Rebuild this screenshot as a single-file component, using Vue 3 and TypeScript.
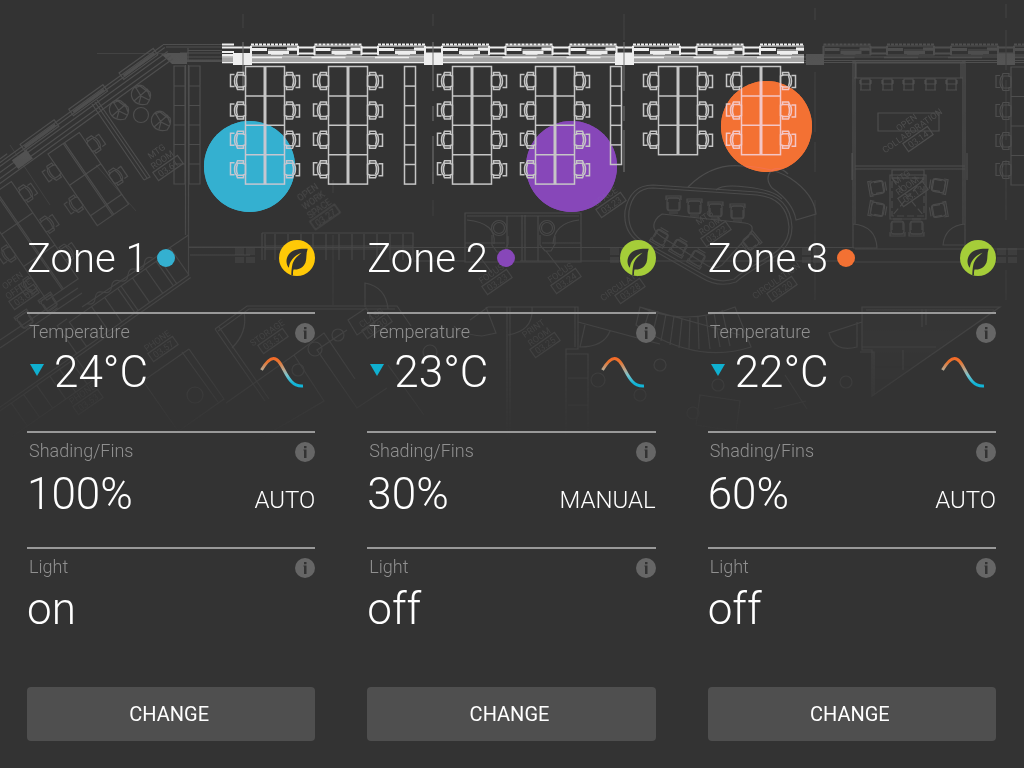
<script setup lang="ts">
interface Zone {
  id: number
  name: string
  color: string
  leaf: string
  temperature: string
  shading: string
  mode: string
  light: string
}

const zones: Zone[] = [
  { id: 1, name: 'Zone 1', color: '#34b0d0', leaf: '#ffc907', temperature: '24°C', shading: '100%', mode: 'AUTO', light: 'on' },
  { id: 2, name: 'Zone 2', color: '#8747b9', leaf: '#a5cd39', temperature: '23°C', shading: '30%', mode: 'MANUAL', light: 'off' },
  { id: 3, name: 'Zone 3', color: '#f37133', leaf: '#a5cd39', temperature: '22°C', shading: '60%', mode: 'AUTO', light: 'off' },
]

interface Desk { x: number; rows: number }
const desks: Desk[] = [
  { x: 245, rows: 4 },
  { x: 328, rows: 4 },
  { x: 452, rows: 4 },
  { x: 535, rows: 4 },
  { x: 658, rows: 3 },
  { x: 741, rows: 3 },
]
const cabinets = [
  { x: 404.5, cells: 6 },
  { x: 610.5, cells: 5 },
]
const spots = [
  { x: 249.5, y: 166.5, color: '#34b0d0' },
  { x: 571.5, y: 166.5, color: '#8747b9' },
  { x: 766.5, y: 126.5, color: '#f37133' },
]

interface Sign { x: number; y: number; lines: string[]; code: string }
const signs: Sign[] = [
  { x: 168, y: 168, lines: ['MTG', 'ROOM'], code: '03.61' },
  { x: 325, y: 217, lines: ['OPEN', 'WORK', 'SPACE'], code: '03.27' },
  { x: 611, y: 205, lines: ['SPACE'], code: '03.23' },
  { x: 918, y: 139, lines: ['OPEN', 'COLLABORATION'], code: '03.14' },
  { x: 913, y: 194, lines: ['MTG', 'ROOM'], code: '03.13' },
  { x: 716, y: 234, lines: ['MTG', 'ROOM'], code: '03.22' },
  { x: 782, y: 289, lines: ['CIRCULATION'], code: '03.20' },
  { x: 630, y: 291, lines: ['CIRCULATION'], code: '03.28' },
  { x: 497, y: 282, lines: ['FOCUS'], code: '03.23' },
  { x: 566, y: 281, lines: ['FOCUS'], code: '03.24' },
  { x: 24, y: 297, lines: ['OPEN', 'OFFICE'], code: '03.02' },
  { x: 163, y: 349, lines: ['PHONE'], code: '03.57' },
  { x: 273, y: 341, lines: ['STORAGE'], code: '03.51' },
  { x: 545, y: 345, lines: ['PRINT', 'ROOM'], code: '03.25' },
  { x: 377, y: 326, lines: ['CLASS'], code: '03.30' },
  { x: 88, y: 402, lines: ['PHONE'], code: '03.53' },
]

const brightWindows = [251, 314.5, 378, 442, 505.5, 569.5, 633, 696.5, 760]
const paleWindows = [823.5, 887, 951, 1014]
</script>

<template>
  <main class="dashboard">
    <svg class="plan" viewBox="0 0 1024 440" aria-hidden="true">
      <defs>
        <linearGradient id="fade" gradientUnits="userSpaceOnUse" x1="0" y1="0" x2="0" y2="440">
          <stop offset="0" stop-color="#fff" />
          <stop offset=".38" stop-color="#e4e4e4" />
          <stop offset=".55" stop-color="#b0b0b0" />
          <stop offset=".8" stop-color="#808080" />
          <stop offset="1" stop-color="#000" />
        </linearGradient>
        <mask id="fadeMask" maskUnits="userSpaceOnUse" x="0" y="0" width="1024" height="440">
          <rect width="1024" height="440" fill="url(#fade)" />
        </mask>
        <clipPath id="brightEdge"><rect x="222" y="40" width="582" height="30" /></clipPath>
        <g id="chair">
          <path d="M-11-6.500h-4v12h4M-10-5q1.500-1 3-1h4l3 1v10l-3 1h-4q-2 0-3-1M-10-5q-2 5 0 10M-8-5q-2 5 0 10M-9-6l1-2.500h6v2.500M-9 6l1 2.500h6v-2.500" />
        </g>
        <g id="seat">
          <rect x="-6" y="-7" width="13" height="13" rx="3" />
          <path d="M-7-7h15M-7-5v-4h15v4M-5-3v8h11v-8M-4 8h9" />
        </g>
        <g id="window">
          <path d="M0 46h47v9H0zM17 50h30" stroke-width="1.200" />
          <path d="M0 44.500h47" stroke-width="2" stroke-dasharray="3 1" />
          <path d="M1 49.500h15M17 52.500h21M36 49h10" stroke-width="3" />
          <path d="M0 46v9M47 46v9" stroke-width="2" />
          <path d="M47 47.500h17M47 53.500h17" stroke-width="2" />
          <path d="M20 54h12M-3 57.500h34" stroke-width="1.500" />
        </g>
      </defs>

      <circle v-for="s in spots" :key="s.x" :cx="s.x" :cy="s.y" r="45.500" :fill="s.color" />

      <g class="pale" mask="url(#fadeMask)">
        <!-- straight facade, both unlit ends -->
        <path d="M163 44.500h59M166 47h56M188 50.500h34M180 53h42M172 57h50M180 61.500h42M188 48v14" />
        <path d="M186 60.500h36" stroke-width="2" />
        <path class="solid" d="M160 53h27v11h-15z" />
        <path d="M804 57h220M804 60.500h220M804 62.500h220" />
        <use v-for="x in paleWindows" :key="x" href="#window" :x="x" />
        <rect class="solid" x="806" y="54" width="18" height="11" />
        <rect class="solid" x="997" y="54" width="18" height="11" />
        <path class="thin" d="M97 53.500h70M243 14v14M433 14v12M624 14v26M815 8v12M815 72v60M815 142v30M815 200v100M1006 4v14M1006 30v40M1006 80v60M1006 160v60M1006 270v30M433 172v12M433 200v16M96 165l40 46M10 145l40 60M333 180v13M333 235v70" />

        <!-- diagonal facade -->
        <g transform="translate(163 45) rotate(144.200)">
          <path d="M0 0h215M0-3h215M0-8h215M0-13h215M0-17h215M10 3h42v-8h-42zM72 3h42v-8h-42zM132 3h42v-8h-42zM190 3h20" />
          <path d="M12-2h38M74-2h38M134-2h38" stroke-width="3" />
          <rect class="solid" x="172" y="-16" width="18" height="11" />
        </g>
        <path d="M92 104l52 76M97 100l53 77l-6 3M95 102l52 76" />

        <!-- left cabinets and partition -->
        <path d="M174 66h11v118h-11zM189 66h11v118h-11zM174 86h11M174 105.500h11M174 125h11M174 144.500h11M174 164h11M189 86h11M189 105.500h11M189 125h11M189 144.500h11M189 164h11M185.500 65v170M188.500 65v211" />
        <circle cx="141" cy="115" r="7.500" />
        <g v-for="c in [[141, 95], [119, 110], [161, 121]]" :key="c[0]" :transform="`translate(${c[0]} ${c[1]})`">
          <path d="M-9-4q4-8 11-5l7 6q2 6-3 12q-8 2-13-3q-4-5-2-10zM-7 6l14-12M-5-7l5 8l8 4M0 1l-2 7M-6-7l5-2 8 6 2 5" />
        </g>

        <!-- angled desk clusters -->
        <g transform="translate(48 154) rotate(-34.500)">
          <path d="M0 0h38v87H0zM18.500 0v87M20 0v87M0 38h38M0 75h38" />
          <use href="#chair" y="18" /><use href="#chair" y="57" />
          <use href="#chair" y="-18" transform="translate(38 0) rotate(180)" />
          <use href="#chair" y="-57" transform="translate(38 0) rotate(180)" />
        </g>
        <g transform="translate(-20 203) rotate(-34.500)">
          <path d="M0 0h38v118H0zM18.500 0v118M20 0v118M0 38h38M0 77h38" />
          <use href="#chair" y="58" /><use href="#chair" y="96" />
          <use href="#chair" y="-18" transform="translate(38 0) rotate(180)" />
          <use href="#chair" y="-56" transform="translate(38 0) rotate(180)" />
          <use href="#chair" y="-90" transform="translate(38 0) rotate(180)" />
        </g>

        <!-- angled storage run -->
        <g transform="translate(189 275) rotate(145)">
          <path d="M0 0h270M0-3h270M0 30h125v-30M0 0v33M15 0v30M19 0v30M32 0v30M48 0v30M62 0v30M66 0v30M82 0v30M98 0v30M125 34h12v-34M140-3v-28h100M146-3v-28M160-3v-28M172-3v-28M188-3v-28M204-3v-28M219-3v-28M20 35q5 6 10 0t10 0 10 0 10 0 10 0 10 0 10 0 10 0" />
        </g>
        <path d="M188.500 235L82 307M189 247h75M0 340l78-52M0 348l82-55M190 255h60" />
        <use href="#seat" transform="translate(49 304) rotate(-35)" />
        <use href="#seat" transform="translate(25 321) rotate(-35)" />

        <!-- middle shelving -->
        <path d="M262 233h151v27M262 233v27M265 234v26M265 246h148M265 249h148M275 234v26M288 234v26M301 234v26M313 234v26M326 234v26M339 234v26M352 234v26M364 234v26M377 234v26M390 234v26M403 234v26" />
        <path d="M189 247.500h665M413 261h52M520 261h335M855 249h169M855 262h142" />
        <g v-for="x in [235, 610, 802, 997]" :key="x" class="solid soft">
          <rect :x="x" y="248" width="9" height="7" /><rect :x="x + 11" y="248" width="9" height="7" />
          <rect :x="x" y="257" width="9" height="6" /><rect :x="x + 11" y="257" width="9" height="6" />
        </g>

        <!-- focus booths -->
        <path d="M465 213h116v49H465zM467 216h112M507 216v45M522 215v46M525 215v46M538 216v45M465 243h40M542 243h39M467 220q30 3 27 24M579 220q-25 3-26 24" />
        <circle cx="499" cy="228" r="7.500" /><circle cx="499" cy="228" r="5.500" />
        <circle cx="547" cy="228" r="7.500" /><circle cx="547" cy="228" r="5.500" />
        <path d="M492 235v10l5 7h7l4-8v-8M540 235v10l5 6h6l4-7v-8M480 257l12 16M546 251l14 18" />

        <!-- oval meeting room -->
        <path d="M688 187q24-24 54-21q30 1 48 12q24 16 26 36l-20 6q-3-18-24-32q-8-10 0-18q8-4 16 4M716 190q6-6 30-3q28 3 36 12" />
        <path d="M653 185L757 192q33 3 35 35c0 30-32 34-56 55q-18 6-34-4l-63-36q-16-10-14-31q5-26 28-26z M653 188L757 195q30 3 32 32c0 28-32 32-55 52q-15 5-30-4l-63-35q-14-10-12-29q4-23 24-23z" />
        <path d="M662 214l83 9q12 2 4 12l-27 30q-6 5-14 1l-46-29q-14-9-4-20z" />
        <use v-for="c in [[673, 205], [694, 208], [715, 211], [737, 213]]" :key="c[0]" href="#seat" :x="c[0]" :y="c[1]" />
        <use href="#seat" transform="translate(661 237) rotate(210)" />
        <use href="#seat" transform="translate(698 258) rotate(210)" />
        <use href="#seat" transform="translate(680 247) rotate(210)" />
        <use href="#seat" transform="translate(750 242) rotate(50)" />

        <!-- open collaboration and meeting room -->
        <path d="M853 61v187M855 61v163M963 61v163M965 61v187M853 61h112M853 63h112M854 78h109M856 62v16M961 62v16M855 166h110M855 169h110M852 153v27M967 153v27M878 113h61v18h-61zM853 224q23 2 24 24h-24M965 224q-20 2-22 21h22" />
        <g v-for="x in [865, 887, 908, 930, 951]" :key="x"><path :d="`M${x - 4} 79h9v11h-9zM${x - 5} 84h11M${x - 5} 80v4M${x + 6} 80v4M${x - 5} 90h11`" /></g>
        <path d="M890 175h36v44h-36zM892 170h32v8h-32z" /><path d="M892 178h32v38h-32zl32 38M924 178l-32 38" stroke-dasharray="7 3" />
        <use href="#seat" transform="translate(878 188) rotate(-100)" /><use href="#seat" transform="translate(878 210) rotate(-80)" />
        <use href="#seat" transform="translate(938 185) rotate(100)" /><use href="#seat" transform="translate(938 210) rotate(80)" />
        <use href="#seat" transform="translate(898 227) rotate(180)" /><use href="#seat" transform="translate(917 227) rotate(180)" />

        <!-- right desks -->
        <path d="M1030 67h-19v118h19M1011 96.500h14M1011 126h14M1011 155.500h14" />
        <use v-for="y in [82, 111, 141, 170]" :key="y" href="#chair" x="1011" :y="y" />

        <!-- lower rooms -->
        <path d="M215 329l32-23h150l14 20M218 331l31-22h146M215 329l50 72M219 327l50 72M365 307v-24q21 4 23 26M244 312q4 20-12 36M189 349l35 50-48 34M189 349l-46 32M182 352l36 50M143 381l35 50M226 403l68-48 30 46-68 40M294 355l30-22 31 46M347 330l-30 20 40 58 30-20M388 365l36 50M348 320l18-12 9 15-18 12z" />
        <circle cx="195" cy="395" r="8" /><circle cx="338" cy="335" r="6" /><circle cx="315" cy="349" r="7" /><circle cx="298" cy="370" r="6" /><circle cx="430" cy="352" r="7" />
        <path d="M470 320l18-13h90v42M507 307v133M510 307v133M486 307l10 26-14 3q-22-2-28-10M532 307q2 24-24 28M578 307v42h-12v90M575 307v40M578 322l82 22M585 325l-5 22q24 0 30-16M566 354h22v78h-22M568 378h20M568 405h20M640 307l100 28M636 325q60 40 115 22l-16-40q-50 20-95 0zM650 309l-7 22M658 311l-6 25M666 314l-5 27M674 316l-4 29M682 318l-3 30M690 318l-1 31M698 317l1 32M706 316l4 33M714 313l6 34M722 310l8 36" />
        <path class="solid faint" d="M862 307h138L872 396v-46h-10z" />
        <path d="M862 307h138L872 396v-46h-10zM866 310h128M922 309v18M926 309v16M862 347h74M860 352h14v42M903 350v20M862 322l-33 11q5 20 28 14v-25" />
        <path d="M700 395l40 6-4 30-40-6zM785 375l22 34M774 409l32-8" />
        <circle cx="718" cy="385" r="6" /><circle cx="693" cy="413" r="6" /><circle cx="598" cy="380" r="7" /><circle cx="660" cy="365" r="6" /><circle cx="640" cy="395" r="6" /><circle cx="846" cy="382" r="6" />

        <g v-for="(s, i) in signs" :key="i" :transform="`translate(${s.x} ${s.y}) rotate(-35)`">
          <rect x="-15" y="-5" width="30" height="10" />
          <text y="3.500">{{ s.code }}</text>
          <text v-for="(line, j) in s.lines" :key="line" :y="-7 - (s.lines.length - 1 - j) * 10">{{ line }}</text>
        </g>
      </g>

      <g class="bright">
        <g class="facade" clip-path="url(#brightEdge)">
          <path d="M222 57h582M222 62.500h582" />
          <path class="band" d="M222 60h582" stroke-width="4" />
          <path class="band" d="M222 58h582" stroke-width="1" />
          <path d="M222 44.500h12M222 47.500h29M222 52h12M222 55h12" stroke-width="2" />
          <use v-for="x in brightWindows" :key="x" href="#window" :x="x" />
        </g>
        <g class="solid">
          <rect v-for="x in [233, 424, 615]" :key="x" :x="x" y="53" width="19" height="12" />
        </g>
        <path class="axis" d="M243 42v49M433 42v49M433 106v15M433 136v48M624 42v49M624 106v15M624 130v42" />

        <g v-for="d in desks" :key="d.x" :transform="`translate(${d.x + 0.5} 66.500)`">
          <rect width="39" :height="d.rows * 29.4" />
          <path class="spine" :d="`M19.5 0v${d.rows * 29.4}`" />
          <path v-for="r in d.rows - 1" :key="r" :d="`M0 ${r * 29.4}h39`" />
          <g v-for="r in d.rows" :key="r" :transform="`translate(0 ${r * 29.4 - 14.9})`">
            <use href="#chair" /><use href="#chair" transform="translate(39 0) rotate(180)" />
          </g>
        </g>
        <g v-for="c in cabinets" :key="c.x">
          <rect :x="c.x" y="66.500" width="11" :height="c.cells * 19.6" />
          <path v-for="n in c.cells - 1" :key="n" :d="`M${c.x} ${66.5 + n * 19.6}h11`" />
        </g>
      </g>

      <circle v-for="s in spots" :key="s.y + s.x" class="tint" :cx="s.x" :cy="s.y" r="45.500" :fill="s.color" />
    </svg>

    <div class="map-space"></div>

    <div class="zones">
      <section v-for="z in zones" :key="z.id" class="zone" :aria-label="z.name">
        <header class="zone-head">
          <h2>{{ z.name }}</h2>
          <span class="dot" :style="{ background: z.color }"></span>
          <svg class="leaf" viewBox="0 0 36 36" aria-hidden="true">
            <circle cx="18" cy="18" r="18" :fill="z.leaf" />
            <path fill="#333" d="M28.700 8.800C20 8.300 13.300 9.700 9.700 14.500C6.500 18.800 7 24.500 9.900 27.800C10.300 21.500 14.500 16 22.600 12.700C17.600 16.600 14.200 20.300 13.300 25C12.600 28.500 12.300 32 12.300 35.100L14.100 35.600C13.900 33.200 14 31 14.500 29.400C19.500 30.200 24.500 27.500 26.500 22.500C28 18.400 26.800 13.500 28.700 8.800Z" />
          </svg>
        </header>

        <div class="reading temperature">
          <div class="label-row">
            <h3>Temperature</h3>
            <button class="info" type="button" aria-label="Temperature information">
              <svg viewBox="0 0 20 20"><circle cx="10" cy="10" r="10" /><path d="M9 4h2.500v2.200H9zM8.500 7.500h3V16H9V8.500h-.5z" /></svg>
            </button>
          </div>
          <div class="value-row">
            <svg class="arrow" viewBox="0 0 14 12" aria-hidden="true"><path d="M0 0h14L7 12z" fill="#10b0d0" /></svg>
            <span class="value">{{ z.temperature }}</span>
            <svg class="curve" viewBox="0 0 44 32" aria-hidden="true">
              <defs>
                <linearGradient :id="`heat-${z.id}`" gradientUnits="userSpaceOnUse" x1="0" y1="2" x2="0" y2="30">
                  <stop offset="0" stop-color="#f36a28" /><stop offset=".14" stop-color="#e8742f" />
                  <stop offset=".42" stop-color="#b9a891" /><stop offset=".62" stop-color="#78c4cd" />
                  <stop offset=".9" stop-color="#12b4d6" />
                </linearGradient>
              </defs>
              <path d="M1.500 14C6 6.500 9.500 2.500 13.500 2.500C24 2.500 25 31.500 43 30" fill="none" :stroke="`url(#heat-${z.id})`" stroke-width="3" />
            </svg>
          </div>
        </div>

        <div class="reading shading">
          <div class="label-row">
            <h3>Shading/Fins</h3>
            <button class="info" type="button" aria-label="Shading information">
              <svg viewBox="0 0 20 20"><circle cx="10" cy="10" r="10" /><path d="M9 4h2.500v2.200H9zM8.500 7.500h3V16H9V8.500h-.5z" /></svg>
            </button>
          </div>
          <div class="value-row">
            <span class="value">{{ z.shading }}</span>
            <span class="mode">{{ z.mode }}</span>
          </div>
        </div>

        <div class="reading light">
          <div class="label-row">
            <h3>Light</h3>
            <button class="info" type="button" aria-label="Light information">
              <svg viewBox="0 0 20 20"><circle cx="10" cy="10" r="10" /><path d="M9 4h2.500v2.200H9zM8.500 7.500h3V16H9V8.500h-.5z" /></svg>
            </button>
          </div>
          <div class="value-row"><span class="value">{{ z.light }}</span></div>
        </div>

        <button class="change" type="button">CHANGE</button>
      </section>
    </div>
  </main>
</template>

<style>
html, body { margin: 0; background: #333; }
</style>

<style scoped>
.dashboard {
  position: relative;
  min-height: 100vh;
  box-sizing: border-box;
  padding-bottom: 27px;
  overflow: hidden;
  background: #333;
  color: #fff;
  font-family: Roboto, "Liberation Sans", sans-serif;
  font-weight: 300;
}
.plan { position: absolute; top: 0; left: 0; width: 100%; height: auto; pointer-events: none; }
.pale { fill: none; stroke: #505050; stroke-width: 1.2; }
.pale .solid { fill: #555; stroke: none; }
.pale .soft { opacity: .5; }
.pale .faint { opacity: .15; }
.pale .thin { stroke: #444; stroke-width: 1; }
.pale text { fill: #505050; stroke: none; font-size: 9px; font-weight: 400; text-anchor: middle; }
.bright { fill: none; stroke: #c6c6c6; stroke-width: 1.5; }
.bright .solid { fill: #eee; stroke: none; }
.bright .facade { stroke: #eee; }
.bright .band { stroke: #a4a4a4; }
.bright .axis { stroke: #777; stroke-width: 1; }
.bright .spine { stroke-width: 3; }
.tint { mix-blend-mode: lighten; }

.map-space { aspect-ratio: 1024 / 234; }
.zones {
  position: relative;
  display: grid;
  grid-template-columns: repeat(3, minmax(0, 1fr));
  gap: 52px;
  padding: 0 28px 0 27px;
}
.zone { display: flex; flex-direction: column; }
.zone-head { display: flex; align-items: center; height: 48px; margin-bottom: 30px; }
h2 { margin: 0; padding-top: 2px; font-size: 40px; line-height: 46px; font-weight: 300; white-space: nowrap; }
.dot { width: 18px; height: 18px; margin-left: 9px; border-radius: 50%; }
.leaf { width: 36px; height: 36px; margin-left: auto; }

.reading { border-top: 2px solid #999; box-sizing: border-box; }
.temperature { height: 119px; }
.shading { height: 116px; }
.light { height: 140px; }
.label-row { display: flex; align-items: center; justify-content: space-between; height: 20px; padding: 9px 0 0 2px; }
h3 { margin: 0; padding-bottom: 2px; font-size: 18px; line-height: 20px; font-weight: 300; color: #909090; }
.info { width: 20px; height: 20px; padding: 0; border: 0; background: none; }
.info svg { display: block; width: 20px; height: 20px; fill: #666; }
.info path { fill: #333; }
.value-row { display: flex; align-items: center; height: 52px; }
.temperature .value-row { margin-top: 3px; }
.shading .value-row { margin-top: 6px; }
.light .value-row { margin-top: 5px; }
.value { font-size: 44px; line-height: 52px; }
.arrow { width: 14px; height: 12px; margin: 0 10px 4px 3px; }
.curve { width: 44px; height: 32px; margin: 0 11px 0 auto; }
.mode { margin-left: auto; padding-top: 12px; font-size: 24px; line-height: 28px; }
.change {
  height: 54px;
  padding: 0 8px 0 4px;
  border: 0;
  border-radius: 4px;
  background: #4f4f4f;
  color: #fff;
  font-family: inherit;
  font-size: 20px;
  font-weight: 400;
}
</style>
